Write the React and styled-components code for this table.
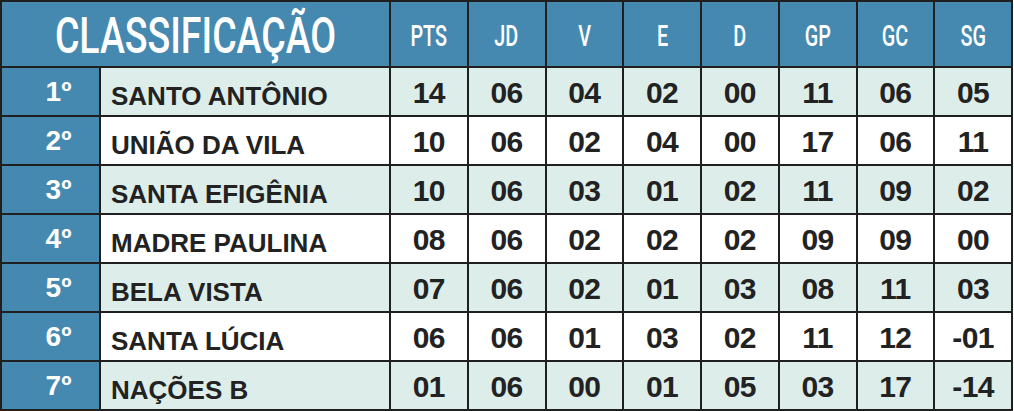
import React from 'react';
import styled, { createGlobalStyle } from 'styled-components';

const GlobalStyle = createGlobalStyle`
  html, body {
    margin: 0;
    padding: 0;
    background: #ffffff;
  }
  body {
    font-family: "Liberation Sans", Arial, sans-serif;
  }
`;

const Table = styled.div`
  display: grid;
  grid-template-columns: 97px 288px repeat(8, 75.75px);
  grid-template-rows: 64px repeat(7, 47px);
  gap: 2px;
  padding: 2px;
  width: 1013px;
  box-sizing: border-box;
  background: #1f1f1f;
`;

const TitleCell = styled.div`
  grid-column: span 2;
  background: #4589b1;
  display: flex;
  align-items: center;
  justify-content: center;
  padding-top: 4px;
`;

const Condensed = styled.span`
  display: inline-block;
  font-family: Roboto, "Liberation Sans", sans-serif;
  font-weight: 500;
  color: #ffffff;
  font-size: ${(p) => p.$size}px;
  transform: scaleX(${(p) => p.$scale});
  white-space: nowrap;
  line-height: 1;
`;

const HeadCell = styled.div`
  background: #4589b1;
  display: flex;
  align-items: center;
  justify-content: center;
  padding-top: 4px;
`;

const PosCell = styled.div`
  background: #4589b1;
  color: #ffffff;
  font-weight: 700;
  font-size: 28px;
  display: flex;
  align-items: center;
  justify-content: center;
  padding-left: 16px;
`;

const NameCell = styled.div`
  background: ${(p) => (p.$alt ? '#ddedea' : '#ffffff')};
  color: #222222;
  font-weight: 700;
  font-size: 26px;
  display: flex;
  align-items: center;
  padding-left: 10px;
  padding-top: 9px;
  white-space: nowrap;
`;

const NumCell = styled.div`
  background: ${(p) => (p.$alt ? '#ddedea' : '#ffffff')};
  color: #222222;
  font-weight: 700;
  font-size: 30px;
  letter-spacing: -0.5px;
  display: flex;
  align-items: center;
  justify-content: center;
  padding-top: 2px;
`;

const columns = ['PTS', 'JD', 'V', 'E', 'D', 'GP', 'GC', 'SG'];

const teams = [
  { pos: '1º', name: 'SANTO ANTÔNIO', stats: ['14', '06', '04', '02', '00', '11', '06', '05'] },
  { pos: '2º', name: 'UNIÃO DA VILA', stats: ['10', '06', '02', '04', '00', '17', '06', '11'] },
  { pos: '3º', name: 'SANTA EFIGÊNIA', stats: ['10', '06', '03', '01', '02', '11', '09', '02'] },
  { pos: '4º', name: 'MADRE PAULINA', stats: ['08', '06', '02', '02', '02', '09', '09', '00'] },
  { pos: '5º', name: 'BELA VISTA', stats: ['07', '06', '02', '01', '03', '08', '11', '03'] },
  { pos: '6º', name: 'SANTA LÚCIA', stats: ['06', '06', '01', '03', '02', '11', '12', '-01'] },
  { pos: '7º', name: 'NAÇÕES B', stats: ['01', '06', '00', '01', '05', '03', '17', '-14'] },
];

const App = () => (
  <>
    <GlobalStyle />
    <Table>
      <TitleCell>
        <Condensed $size={50} $scale={0.75}>CLASSIFICAÇÃO</Condensed>
      </TitleCell>
      {columns.map((col) => (
        <HeadCell key={col}>
          <Condensed $size={30} $scale={0.66}>{col}</Condensed>
        </HeadCell>
      ))}
      {teams.map((team, index) => {
        const alt = index % 2 === 0;
        return (
          <React.Fragment key={team.name}>
            <PosCell>{team.pos}</PosCell>
            <NameCell $alt={alt}>{team.name}</NameCell>
            {team.stats.map((value, i) => (
              <NumCell key={i} $alt={alt}>{value}</NumCell>
            ))}
          </React.Fragment>
        );
      })}
    </Table>
  </>
);

export default App;
